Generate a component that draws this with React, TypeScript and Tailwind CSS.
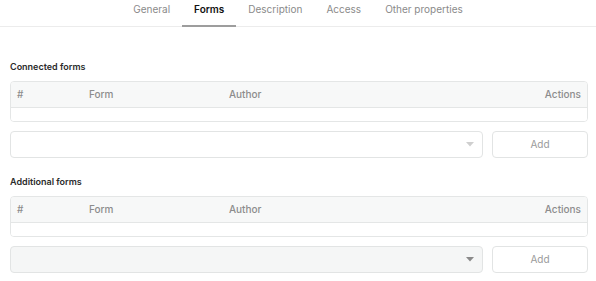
import React from "react";

const tabs = ["General", "Forms", "Description", "Access", "Other properties"];

function Section({ title, disabled }: { title: string; disabled?: boolean }) {
  return (
    <div className="flex flex-col">
      <div className="h-[12px] text-[9px] leading-[12px] font-semibold text-[#2b2b2b]">{title}</div>
      <div className="mt-[8px] rounded-[4px] border border-[#e4e6e6] overflow-hidden">
        <div className="h-[26px] bg-[#f7f8f8] border-b border-[#e4e6e6] flex items-center text-[10px] font-medium text-[#8c8c8c]">
          <div className="w-[72px] pl-[6px]">#</div>
          <div className="w-[140px] pl-[6px]">Form</div>
          <div className="flex-1 pl-[6px]">Author</div>
          <div className="pr-[6px]">Actions</div>
        </div>
        <div className="h-[13px] bg-white" />
      </div>
      <div className="mt-[9px] flex gap-[9px]">
        <div
          className={`h-[27px] flex-1 rounded-[4px] border border-[#e2e4e4] flex items-center justify-end pr-[8px] ${
            disabled ? "bg-[#f5f6f6]" : "bg-white"
          }`}
        >
          <svg width="8" height="5" viewBox="0 0 8 5">
            <path d="M0 0 L8 0 L4 4.5 Z" fill={disabled ? "#8a8a8a" : "#cfcfcf"} />
          </svg>
        </div>
        <div className="h-[27px] w-[96px] rounded-[4px] border border-[#e2e4e4] bg-white flex items-center justify-center text-[10px] text-[#9a9a9a]">
          Add
        </div>
      </div>
    </div>
  );
}

export default function App() {
  return (
    <div className="w-[596px] h-[281px] bg-white overflow-hidden" style={{ fontFamily: "Inter, 'Noto Sans', sans-serif" }}>
      <div className="h-[27px] border-b border-[#ececec] flex justify-center">
        {tabs.map((t) => (
          <div
            key={t}
            className={`px-[12px] h-[27px] pt-[3px] text-[10px] leading-[12px] ${
              t === "Forms" ? "font-semibold text-[#111] border-b-2 border-[#9d9d9d]" : "text-[#8a8a8a]"
            }`}
          >
            {t}
          </div>
        ))}
      </div>
      <div className="pl-[10px] pr-[8px] pt-[34px] flex flex-col gap-[18px]">
        <Section title="Connected forms" />
        <Section title="Additional forms" disabled />
      </div>
    </div>
  );
}
